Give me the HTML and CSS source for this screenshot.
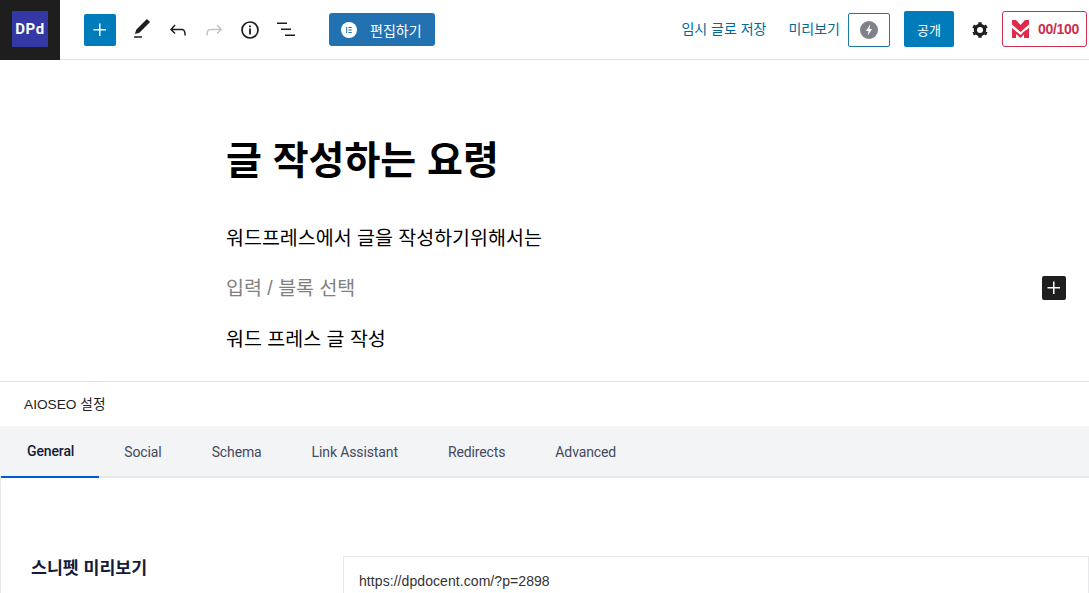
FILE: index.html
```html
<!DOCTYPE html>
<html lang="ko">
<head>
    <meta charset="UTF-8">
    <meta name="viewport" content="width=device-width, initial-scale=1.0">
    <title>글 작성하는 요령</title>
    <link rel="stylesheet" href="styles.css">
</head>
<body>
    <header class="topbar">
        <div class="logo-box"><span class="logo">DPd</span></div>
        <div class="tools">
            <button class="add-btn" type="button">
                <svg width="24" height="24" viewBox="0 0 24 24"><path d="M11 12.5V18h1.500v-5.500H18V11h-5.500V5.500H11V11H5.500v1.500z" fill="#fff"/></svg>
            </button>
            <svg class="tool tool-pen" width="24" height="24" viewBox="0 0 24 24"><path d="M20.100 4.100 16.900 1 6.200 11.700l-1.300 4.400 4.500-1.300zM4 19.800h8v-1.500H4z" fill="#1e1e1e"/></svg>
            <svg class="tool" width="24" height="24" viewBox="0 0 24 24"><path d="M18.300 11.700c-.6-.6-1.400-.9-2.300-.9H6.700l2.900-3.300-1.100-1-4.500 5L8.500 16l1-1-2.700-2.700H16c.5 0 .9.200 1.300.5 1 1 1 3.400 1 4.500v.3h1.500v-.2c0-1.500 0-4.300-1.500-5.700" fill="#1e1e1e"/></svg>
            <svg class="tool" width="24" height="24" viewBox="0 0 24 24"><path d="M15.600 6.500l-1.100 1 2.900 3.300H8c-.9 0-1.700.3-2.300.9-1.400 1.500-1.400 4.200-1.400 5.600v.2h1.500v-.3c0-1.100 0-3.500 1-4.500.3-.3.700-.5 1.300-.5h9.200L14.500 15l1.100 1.100 4.600-4.600z" fill="#c4c4c4"/></svg>
            <svg class="tool" width="24" height="24" viewBox="0 0 24 24"><circle cx="12" cy="12" r="8" fill="none" stroke="#1e1e1e" stroke-width="1.700"/><path d="M11.100 10.500h1.800v6h-1.800zM11.100 7.500h1.800v1.800h-1.800z" fill="#1e1e1e"/></svg>
            <svg class="tool" width="24" height="24" viewBox="0 0 24 24"><path d="M3 4.500h10V6H3zM7 10.500h10V12H7zM11 16.500h10V18H11z" fill="#1e1e1e"/></svg>
            <button class="edit-btn" type="button">
                <svg width="16" height="16" viewBox="0 0 16 16"><circle cx="8" cy="8" r="8" fill="#fff"/><path d="M5.200 5h1v6h-1zM7.400 5h3.400v1h-3.400zM7.400 7.500h3.400v1h-3.400zM7.400 10h3.400v1h-3.400z" fill="#2271b1"/></svg>
                <span>편집하기</span>
            </button>
        </div>
        <div class="actions">
            <a class="link link-save">임시 글로 저장</a>
            <a class="link link-preview">미리보기</a>
            <button class="amp-btn" type="button">
                <svg width="18" height="18" viewBox="0 0 18 18"><circle cx="9" cy="9" r="9" fill="#7d8388"/><path d="M10.300 3.500 5.900 10h2.600l-.8 4.500L12.100 8H9.500z" fill="#fff"/></svg>
            </button>
            <button class="publish-btn" type="button">공개</button>
            <svg class="gear" width="24" height="24" viewBox="0 0 24 24"><g fill="none" stroke="#1e1e1e"><circle cx="12" cy="12" r="4.600" stroke-width="3.200"/><path stroke-width="3.400" d="M12 4.200v2M12 17.800v2M5.200 8.100l1.800 1M17 14.900l1.800 1M5.200 15.900l1.800-1M17 9.100l1.800-1"/></g></svg>
            <button class="score-btn" type="button">
                <svg width="17" height="18" viewBox="0 0 17 18"><path d="M0 0h4l4.500 5L13 0h4v4.500l-8.500 7.500L0 4.500zM0 8l5.500 4.500 3 2.500 3-3L17 8v10h-5v-3.500L8.500 18 4 14v4H0z" fill="#df2a4a"/></svg>
                <span>00/100</span>
            </button>
        </div>
    </header>

    <main class="editor">
        <h1 class="post-title">글 작성하는 요령</h1>
        <div class="block-row">
            <p class="block">워드프레스에서 글을 작성하기위해서는</p>
        </div>
        <div class="block-row">
            <p class="block placeholder">입력 / 블록 선택</p>
            <button class="block-add" type="button">
                <svg width="24" height="24" viewBox="0 0 24 24"><path d="M11 12.500V18h1.500v-5.500H18V11h-5.500V5.500H11V11H5.500v1.500z" fill="#fff"/></svg>
            </button>
        </div>
        <div class="block-row">
            <p class="block">워드 프레스 글 작성</p>
        </div>
    </main>

    <section class="seo">
        <div class="seo-title">AIOSEO 설정</div>
        <nav class="tabs">
            <a class="tab active">General</a>
            <a class="tab">Social</a>
            <a class="tab">Schema</a>
            <a class="tab">Link Assistant</a>
            <a class="tab">Redirects</a>
            <a class="tab">Advanced</a>
        </nav>
        <div class="seo-body">
            <div class="seo-label">스니펫 미리보기</div>
            <div class="snippet">https://dpdocent.com/?p=2898</div>
        </div>
    </section>
</body>
</html>
```
FILE: styles.css
```css
* {
    box-sizing: border-box;
}
html, body {
    height: 100%;
}
body {
    margin: 0;
    height: 593px;
    overflow: hidden;
    background: #fff;
    color: #000;
    font-family: "Liberation Sans", "Noto Sans CJK KR", sans-serif;
}
button {
    border: 0;
    padding: 0;
    font-family: inherit;
    cursor: pointer;
}
svg {
    display: block;
    flex: none;
}

/* top bar */
.topbar {
    display: flex;
    align-items: center;
    height: 60px;
    border-bottom: 1px solid #e0e0e0;
}
.logo-box {
    display: flex;
    align-items: center;
    justify-content: center;
    width: 60px;
    height: 60px;
    padding-bottom: 2px;
    background: #1e1e1e;
}
.logo {
    display: flex;
    align-items: center;
    justify-content: center;
    width: 36px;
    height: 36px;
    border-radius: 1px;
    background: #3338a5;
    color: #fff;
    font-family: "Roboto", sans-serif;
    font-size: 15px;
    font-weight: 700;
    letter-spacing: 0.5px;
}
.tools {
    display: flex;
    align-items: center;
    margin-left: 24px;
}
.add-btn {
    display: flex;
    align-items: center;
    justify-content: center;
    width: 32px;
    height: 32px;
    border-radius: 2px;
    background: #007cba;
}
.tool {
    margin-left: 12px;
}
.tool-pen {
    margin-left: 14px;
}
.edit-btn {
    display: flex;
    align-items: center;
    height: 33px;
    margin-left: 31px;
    padding: 0 13px 0 12px;
    border-radius: 3px;
    background: #2271b1;
    color: #fff;
    font-size: 14px;
}
.edit-btn span {
    margin-left: 13px;
}
.actions {
    display: flex;
    align-items: center;
    margin-left: auto;
    padding-right: 2px;
}
.link {
    padding-bottom: 3px;
    color: #006b96;
    font-size: 14px;
}
.link-save {
    margin-right: 1px;
}
.link-preview {
    margin-left: 21px;
}
.amp-btn {
    display: flex;
    align-items: center;
    justify-content: center;
    width: 42px;
    height: 34px;
    margin-left: 8px;
    border: 1px solid #1b7ba5;
    border-radius: 2px;
    background: #fff;
}
.publish-btn {
    width: 50px;
    height: 36px;
    margin: 0 0 1px 14px;
    border-radius: 2px;
    background: #007cba;
    color: #fff;
    font-size: 13px;
}
.gear {
    margin-left: 14px;
}
.score-btn {
    display: flex;
    align-items: center;
    width: 85px;
    height: 36px;
    margin: 0 0 1px 10px;
    padding-left: 9px;
    border: 1px solid #c9304e;
    border-radius: 3px;
    background: #fff;
    color: #c9304e;
    font-size: 14px;
    font-weight: 700;
}
.score-btn span {
    margin-left: 9px;
    letter-spacing: -0.3px;
}

/* editor */
.editor {
    height: 321px;
    padding-top: 77px;
}
.post-title {
    margin: 0 0 0 226px;
    font-size: 39px;
    font-weight: 700;
    line-height: 48px;
}
.block-row {
    display: flex;
    align-items: center;
    height: 28px;
    margin-top: 22px;
    padding-left: 226px;
}
.post-title + .block-row {
    margin-top: 39px;
}
.block-row:last-child {
    margin-top: 23px;
}
.block {
    margin: 0;
    font-size: 19.5px;
    line-height: 28px;
}
.placeholder {
    color: #808080;
}
.block-add {
    display: flex;
    align-items: center;
    justify-content: center;
    width: 24px;
    height: 24px;
    margin-left: auto;
    margin-right: 23px;
    border-radius: 2px;
    background: #1e1e1e;
}

/* aioseo panel */
.seo {
    border-top: 1px solid #e0e0e0;
}
.seo-title {
    display: flex;
    align-items: center;
    height: 44px;
    padding: 0 0 2px 24px;
    color: #1e1e1e;
    font-size: 13.7px;
}
.tabs {
    display: flex;
    height: 52px;
    padding-left: 1px;
    border-bottom: 2px solid #e8e8eb;
    background: #f3f4f5;
}
.tab {
    display: flex;
    align-items: center;
    height: 52px;
    padding: 0 25px;
    color: #434960;
    font-family: "Roboto", "Noto Sans CJK KR", sans-serif;
    font-size: 14px;
    letter-spacing: -0.12px;
}
.active {
    padding-left: 26px;
    border-bottom: 2px solid #005ae0;
    color: #141b38;
    font-weight: 500;
}
.seo-body {
    display: flex;
    padding: 76px 0 0 30px;
    border-left: 1px solid #e8e8eb;
}
.seo-label {
    width: 312px;
    color: #141b38;
    font-size: 17.300px;
    font-weight: 700;
}
.snippet {
    flex: 1;
    height: 60px;
    margin-top: 2px;
    padding: 16px 15px 0;
    border: 1px solid #e8e8eb;
    color: #333;
    font-size: 14px;
    letter-spacing: 0.07px;
}
```
